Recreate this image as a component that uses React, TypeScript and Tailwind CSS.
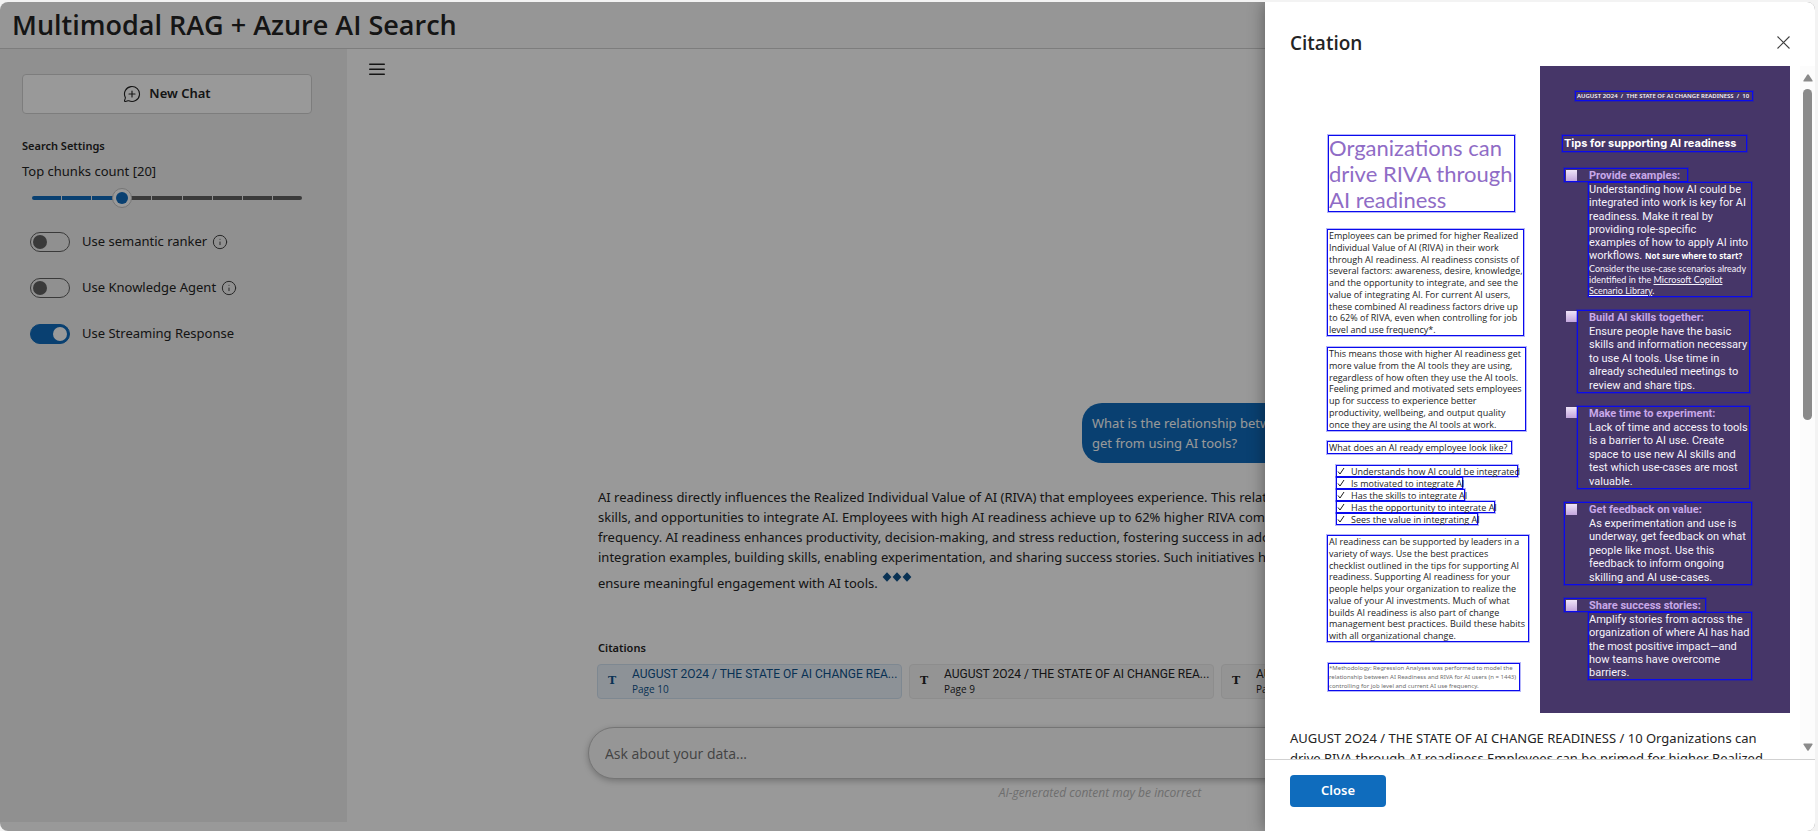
import { useState } from "react";
import type { ReactNode } from "react";
import { Info, MessageCirclePlus } from "lucide-react";

function Switch({ id, label, info, on }: { id: string; label: string; info?: boolean; on?: boolean }) {
  return (
    <div className="flex h-[46px] items-center">
      <label htmlFor={id} className="flex items-center gap-3">
        <input id={id} type="checkbox" role="switch" defaultChecked={on} className="peer sr-only" />
        <span className="flex h-5 w-10 items-center rounded-full border border-[#616161] px-0.5 text-[#616161] peer-checked:justify-end peer-checked:border-[#0f6cbd] peer-checked:bg-[#0f6cbd] peer-checked:text-white">
          <span className="size-3.5 rounded-full bg-current" />
        </span>
        <span>{label}</span>
      </label>
      {info && <Info className="ml-[5px] size-4 text-[#424242]" strokeWidth={1.5} />}
    </div>
  );
}

function ChunkSlider() {
  const [value, setValue] = useState(20);
  return (
    <div className="relative mx-2.5 mt-[7px] flex h-5 items-center">
      <div className="flex h-1 w-full gap-px overflow-hidden rounded-full">
        {Array.from({ length: 9 }, (_, i) => (
          <span key={i} className={i < 3 ? "flex-1 bg-[#0f6cbd]" : "flex-1 bg-[#616161]"} />
        ))}
      </div>
      <span className="absolute left-1/3 flex size-5 -translate-x-1/2 items-center justify-center rounded-full border border-[#c4c4c4] bg-white">
        <span className="size-3 rounded-full bg-[#0f6cbd]" />
      </span>
      <input
        id="chunks"
        type="range"
        min={5}
        max={50}
        step={5}
        value={value}
        onChange={(e) => setValue(Number(e.target.value))}
        className="absolute inset-0 w-full opacity-0"
      />
    </div>
  );
}

function Sidebar() {
  return (
    <aside className="mb-[9px] flex w-[347px] shrink-0 flex-col bg-[#f0f0f0] px-[22px] pt-[25px] text-[13px] text-[#242424]">
      <button className="mr-[13px] flex h-10 items-center justify-center gap-2 rounded-[4px] border border-[#d1d1d1] bg-white font-semibold">
        <MessageCirclePlus className="size-[18px]" strokeWidth={1.5} />
        New Chat
      </button>
      <h2 className="mt-6 text-[11px] leading-4 font-semibold">Search Settings</h2>
      <label htmlFor="chunks" className="mt-[7px] leading-5">
        Top chunks count [20]
      </label>
      <div className="mr-[13px]">
        <ChunkSlider />
      </div>
      <div className="mt-[11px] pl-2">
        <Switch id="ranker" label="Use semantic ranker" info />
        <Switch id="agent" label="Use Knowledge Agent" info />
        <Switch id="stream" label="Use Streaming Response" on />
      </div>
    </aside>
  );
}

function CitationCard({ page, active }: { page: number; active?: boolean }) {
  return (
    <button
      className={
        active
          ? "flex h-[35px] w-[305px] shrink-0 items-center rounded-[4px] border border-[#d3e3f2] bg-[#ebf3fc] text-left text-[#0f548c]"
          : "flex h-[35px] w-[305px] shrink-0 items-center rounded-[4px] border border-[#ebebeb] bg-[#f7f7f7] text-left text-[#242424]"
      }
    >
      <span className="w-[34px] pl-[10px] font-['DejaVu_Serif'] text-[11px] font-bold">T</span>
      <span className="flex flex-col font-['Open_Sans'] whitespace-nowrap">
        <span className="font-['Roboto'] text-[12px] leading-4">AUGUST 2O24 / THE STATE OF AI CHANGE REA...</span>
        <span className="text-[10px] leading-[15px]">Page {page}</span>
      </span>
    </button>
  );
}

const answer = [
  "AI readiness directly influences the Realized Individual Value of AI (RIVA) that employees experience. This relationship",
  "skills, and opportunities to integrate AI. Employees with high AI readiness achieve up to 62% higher RIVA compared",
  "frequency. AI readiness enhances productivity, decision-making, and stress reduction, fostering success in adoption",
  "integration examples, building skills, enabling experimentation, and sharing success stories. Such initiatives help",
];

function Chat() {
  return (
    <main className="flex min-w-0 flex-1">
      <div className="w-[38px] shrink-0 pt-[14px] pl-[22px]">
        <button aria-label="Toggle sidebar" className="block">
          <svg viewBox="0 0 16 12" className="h-3 w-4" stroke="#242424" strokeWidth="1.4" strokeLinecap="round">
            <path d="M.7 1.2h14.6M.7 6.2h14.6M.7 11.2h14.6" />
          </svg>
        </button>
      </div>
      <div className="flex min-w-0 flex-1 justify-center">
        <div className="flex w-full max-w-[1024px] flex-col justify-end">
          <div className="px-[9px] text-[13px] text-[#242424]">
            <div className="flex justify-end">
              <p className="w-[521px] rounded-[20px] bg-[#0f6cbd] px-2.5 py-2.5 leading-5 text-white">
                What is the relationship between AI readiness and the value people
                <br />
                get from using AI tools?
              </p>
            </div>
            <div className="mt-6 overflow-hidden pl-px whitespace-nowrap">
              {answer.map((line) => (
                <p key={line} className="leading-5">
                  {line}
                </p>
              ))}
              <p className="flex h-8 items-center leading-8">
                ensure meaningful engagement with AI tools.
                <span className="mb-3 ml-1 flex text-[#0f548c]">
                  {[0, 1, 2].map((i) => (
                    <svg key={i} viewBox="0 0 10 10" className="size-[10px]" fill="currentColor">
                      <path d="M5 .2 9.4 5 5 9.8.6 5Z" />
                    </svg>
                  ))}
                </span>
              </p>
            </div>
            <h2 className="mt-[41px] pl-px text-[11px] leading-4 font-semibold">Citations</h2>
            <div className="mt-2 flex gap-[7px] overflow-hidden">
              <CitationCard page={10} active />
              <CitationCard page={9} />
              <CitationCard page={8} />
            </div>
          </div>
          <input
            aria-label="Ask about your data"
            placeholder="Ask about your data..."
            className="mt-7 h-[52px] rounded-[26px] border border-[#c4c4c4] bg-[#fafafa] px-4 font-['Open_Sans'] text-[14px] shadow-[0_2px_6px_rgba(0,0,0,0.25)] outline-none placeholder:text-[#707070]"
          />
          <p className="mt-1 mb-7 text-center font-['Open_Sans'] text-[12px] leading-5 text-[#b8b8b8] italic">
            AI-generated content may be incorrect
          </p>
        </div>
      </div>
    </main>
  );
}

const frame = "border border-[#0a0aee] shadow-[0_0_0_1px_rgba(10,10,238,0.3)] whitespace-nowrap ";

function Box({ lines, className }: { lines: ReactNode[]; className: string }) {
  return (
    <div className={frame + "flex flex-col justify-between " + className}>
      {lines.map((line, i) => (
        <span key={i}>{line}</span>
      ))}
    </div>
  );
}

function Swatch() {
  return <span className="mt-px size-[11px] shrink-0 bg-linear-to-b from-[#efe4f8] to-[#c3a6dd]" />;
}

const checks: [string, string][] = [
  ["Understands how AI could be integrated", "w-[182px]"],
  ["Is motivated to integrate AI", "w-[127px]"],
  ["Has the skills to integrate AI", "w-[129px]"],
  ["Has the opportunity to integrate AI", "w-[159px]"],
  ["Sees the value in integrating AI", "w-[142px]"],
];

function TipTitle({ children }: { children: ReactNode }) {
  return <b className="block text-[11px] leading-[13px] font-bold text-[#c8a8e8]">{children}</b>;
}

function DocumentPage() {
  return (
    <div className="grid h-[647px] shrink-0 grid-cols-2 bg-white font-['Open_Sans',sans-serif]">
      <div className="flex min-w-0 flex-col items-start pt-[69px] pl-[37px] text-[9px] leading-[11px] text-[#1c1c1c]">
        <Box
          className="ml-px h-[77px] w-[187px] font-['Lato'] text-[22px] leading-[23px] text-[#8f6cc6]"
          lines={["Organizations can", "drive RIVA through", "AI readiness"]}
        />
        <Box
          className="mt-[17px] h-[107px] w-[197px] pl-px"
          lines={[
            "Employees can be primed for higher Realized",
            "Individual Value of AI (RIVA) in their work",
            "through AI readiness. AI readiness consists of",
            "several factors: awareness, desire, knowledge,",
            "and the opportunity to integrate, and see the",
            "value of integrating AI. For current AI users,",
            "these combined AI readiness factors drive up",
            "to 62% of RIVA, even when controlling for job",
            "level and use frequency*.",
          ]}
        />
        <Box
          className="mt-[11px] h-[84px] w-[199px] pl-px"
          lines={[
            "This means those with higher AI readiness get",
            "more value from the AI tools they are using,",
            "regardless of how often they use the AI tools.",
            "Feeling primed and motivated sets employees",
            "up for success to experience better",
            "productivity, wellbeing, and output quality",
            "once they are using the AI tools at work.",
          ]}
        />
        <Box className="mt-[10px] h-[13px] w-[185px] pl-px" lines={["What does an AI ready employee look like?"]} />
        <ul className="mt-[11px] ml-[9px]">
          {checks.map(([text, width]) => (
            <li key={text} className={frame + "flex h-[12px] items-center " + width}>
              <svg viewBox="0 0 8 8" className="mr-[6px] size-2 shrink-0" fill="none" stroke="#1c1c1c" strokeWidth="1">
                <path d="m1 4.5 2 2.5L7 1" />
              </svg>
              {text}
            </li>
          ))}
        </ul>
        <Box
          className="mt-[10px] h-[107px] w-[202px] pl-px"
          lines={[
            "AI readiness can be supported by leaders in a",
            "variety of ways. Use the best practices",
            "checklist outlined in the tips for supporting AI",
            "readiness. Supporting AI readiness for your",
            "people helps your organization to realize the",
            "value of your AI investments. Much of what",
            "builds AI readiness is also part of change",
            "management best practices. Build these habits",
            "with all organizational change.",
          ]}
        />
        <Box
          className="mt-[21px] ml-px h-7 w-[192px] font-['Noto_Sans'] text-[6px] leading-[8px] text-[#6e6e6e]"
          lines={[
            "*Methodology: Regression Analyses was performed to model the",
            "relationship between AI Readiness and RIVA for AI users (n = 1443)",
            "controlling for job level and current AI use frequency.",
          ]}
        />
      </div>
      <div className="flex min-w-0 flex-col items-start bg-[#463668] pt-[25px] pl-[22px] font-['Roboto'] text-[11px] leading-[13px] text-[#f6f3fb]">
        <Box
          className="ml-[13px] h-[10px] w-[178px] pl-px font-['Noto_Sans'] text-[6px] leading-[8px] font-semibold"
          lines={["AUGUST 2O24 \u00a0/\u00a0 THE STATE OF AI CHANGE READINESS \u00a0/\u00a0 10"]}
        />
        <Box
          className="mt-[34px] h-[17px] w-[185px] pl-px font-['Inter'] text-[11px] leading-[15px] font-bold text-white"
          lines={["Tips for supporting AI readiness"]}
        />
        <div className={frame + "mt-4 ml-[2px] flex h-[14px] w-[124px] gap-3 pl-px"}>
          <Swatch />
          <TipTitle>Provide examples:</TipTitle>
        </div>
        <Box
          className="ml-[26px] h-[115px] w-[164px]"
          lines={[
            "Understanding how AI could be",
            "integrated into work is key for AI",
            "readiness. Make it real by",
            "providing role-specific",
            "examples of how to apply AI into",
            <>
              workflows. <b className="font-['Noto_Sans'] text-[8px] text-white">Not sure where to start?</b>
            </>,
            <span className="block font-['Lato'] text-[9px] leading-[11px]">Consider the use-case scenarios already</span>,
            <span className="block font-['Lato'] text-[9px] leading-[11px]">
              identified in the <u>Microsoft Copilot</u>
            </span>,
            <span className="block font-['Lato'] text-[9px] leading-[11px]">
              <u>Scenario Library</u>.
            </span>,
          ]}
        />
        <div className="mt-[13px] ml-[4px] flex">
          <Swatch />
          <Box
            className="h-[83px] w-[173px] pl-[11px]"
            lines={[
              <TipTitle>Build AI skills together:</TipTitle>,
              "Ensure people have the basic",
              "skills and information necessary",
              "to use AI tools. Use time in",
              "already scheduled meetings to",
              "review and share tips.",
            ]}
          />
        </div>
        <div className="mt-[13px] ml-[4px] flex">
          <Swatch />
          <Box
            className="h-[83px] w-[173px] pl-[11px]"
            lines={[
              <TipTitle>Make time to experiment:</TipTitle>,
              "Lack of time and access to tools",
              "is a barrier to AI use. Create",
              "space to use new AI skills and",
              "test which use-cases are most",
              "valuable.",
            ]}
          />
        </div>
        <div className={frame + "mt-[13px] ml-[2px] flex w-[188px] gap-3 pl-px"}>
          <Swatch />
          <div className="flex h-[81px] flex-col justify-between">
            <TipTitle>Get feedback on value:</TipTitle>
            <span>As experimentation and use is</span>
            <span>underway, get feedback on what</span>
            <span>people like most. Use this</span>
            <span>feedback to inform ongoing</span>
            <span>skilling and AI use-cases.</span>
          </div>
        </div>
        <div className={frame + "mt-[13px] ml-[2px] flex h-[14px] w-[142px] gap-3 pl-px"}>
          <Swatch />
          <TipTitle>Share success stories:</TipTitle>
        </div>
        <Box
          className="ml-[26px] h-[68px] w-[164px]"
          lines={[
            "Amplify stories from across the",
            "organization of where AI has had",
            "the most positive impact—and",
            "how teams have overcome",
            "barriers.",
          ]}
        />
      </div>
    </div>
  );
}

function CitationPanel() {
  return (
    <section
      role="dialog"
      aria-label="Citation"
      className="absolute inset-y-0 right-0 flex w-[550px] flex-col bg-white text-[#242424] shadow-[0_0_16px_rgba(0,0,0,0.4)]"
    >
      <header className="flex h-16 shrink-0 items-center justify-between pt-[18px] pr-[25px] pl-[25px]">
        <h2 className="font-['Open_Sans'] text-[19px] leading-7 font-semibold">Citation</h2>
        <button aria-label="Dismiss" className="mb-px text-[#424242]">
          <svg viewBox="0 0 13 13" className="size-[13px]" stroke="currentColor" strokeWidth="1.1">
            <path d="m.5.5 12 12M12.5.5l-12 12" />
          </svg>
        </button>
      </header>
      <div className="flex min-h-0 flex-1 border-b border-[#d1d1d1]">
        <div className="flex min-w-0 flex-1 flex-col overflow-hidden pr-[10px] pl-[25px]">
          <DocumentPage />
          <p className="mt-[15px] text-[13px] leading-5 whitespace-nowrap">
            AUGUST 2O24 / THE STATE OF AI CHANGE READINESS / 10 Organizations can
            <br />
            drive RIVA through AI readiness Employees can be primed for higher Realized
          </p>
        </div>
        <div className="flex w-[15px] shrink-0 flex-col items-center bg-[#fcfcfc] pt-2 pb-2" aria-hidden="true">
          <svg viewBox="0 0 10 8" className="h-2 w-[10px]" fill="#8a8a8a">
            <path d="M4.2.8a1 1 0 0 1 1.6 0L9.5 6.4c.4.7 0 1.2-.7 1.2H1.2C.5 7.6.1 7.1.5 6.4Z" />
          </svg>
          <span className="mt-[7px] h-[331px] w-[9px] rounded-full bg-[#8a8a8a]" />
          <svg viewBox="0 0 10 8" className="mt-auto h-2 w-[10px] rotate-180" fill="#8a8a8a">
            <path d="M4.2.8a1 1 0 0 1 1.6 0L9.5 6.4c.4.7 0 1.2-.7 1.2H1.2C.5 7.6.1 7.1.5 6.4Z" />
          </svg>
        </div>
      </div>
      <footer className="flex h-[71px] shrink-0 items-start pt-[15px] pl-[25px]">
        <button className="h-8 w-24 rounded-[4px] bg-[#0f6cbd] text-[13px] font-semibold text-white">Close</button>
      </footer>
    </section>
  );
}

export default function App() {
  return (
    <div className="h-screen bg-[#f3f3f3] pt-0.5 pr-[3px] font-['Noto_Sans',sans-serif]">
      <div className="relative flex h-full flex-col overflow-hidden rounded-[8px] bg-white">
        <header className="flex h-[47px] shrink-0 items-center border-b border-[#d1d1d1] bg-[#fafafa] pl-[12px]">
          <h1 className="font-['Open_Sans'] text-[27px] leading-9 font-semibold text-[#242424]">
            Multimodal RAG + Azure AI Search
          </h1>
        </header>
        <div className="flex min-h-0 flex-1">
          <Sidebar />
          <Chat />
        </div>
        <div className="absolute inset-0 bg-black/40" />
        <CitationPanel />
      </div>
    </div>
  );
}
